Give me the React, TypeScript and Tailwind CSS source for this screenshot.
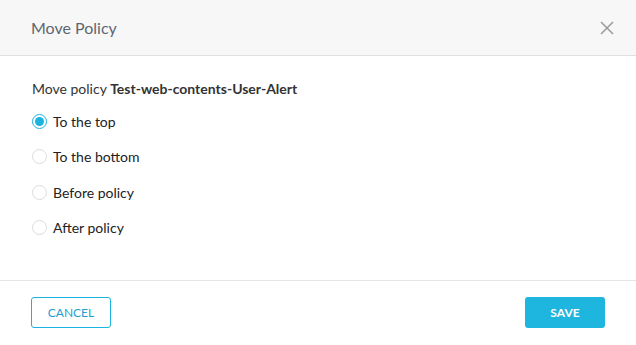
import { useState } from 'react';

const options = [
  { id: 'top', label: 'To the top' },
  { id: 'bottom', label: 'To the bottom' },
  { id: 'before', label: 'Before policy' },
  { id: 'after', label: 'After policy' },
];

function Radio({ checked }: { checked: boolean }) {
  return (
    <span
      className={`flex h-[15px] w-[15px] items-center justify-center rounded-full border bg-white ${
        checked ? 'border-[#1bb3df]' : 'border-[#dcdcdc]'
      }`}
    >
      {checked && <span className="h-[9px] w-[9px] rounded-full bg-[#1bb3df]" />}
    </span>
  );
}

export default function App() {
  const [value, setValue] = useState('top');

  return (
    <div className="flex h-[345px] w-[636px] flex-col bg-white font-['Lato','Liberation_Sans',sans-serif] text-[#333]">
      {/* Header */}
      <div className="flex h-[56px] items-center justify-between border-b border-[#e0e0e0] bg-[#f7f7f7] pl-[31px] pr-[22px]">
        <h2 className="text-[16px] text-[#5f6670]">Move Policy</h2>
        <button className="text-[#9a9a9a]" aria-label="Close">
          <svg width="14" height="14" viewBox="0 0 14 14" fill="none" stroke="currentColor" strokeWidth="1.5">
            <path d="M1 1l12 12M13 1L1 13" />
          </svg>
        </button>
      </div>

      {/* Body */}
      <div className="flex-1 border-b border-[#e5e5e5] px-[32px] pt-[23px]">
        <p className="text-[14px] leading-[20px] text-[#333]">
          Move policy <span className="font-bold">Test-web-contents-User-Alert</span>
        </p>
        <ul className="mt-[12px] flex flex-col gap-[15.5px]">
          {options.map(({ id, label }) => (
            <li key={id}>
              <label
                className="flex h-[20px] cursor-pointer items-center gap-[6px] text-[14px] text-[#222]"
                onClick={() => setValue(id)}
              >
                <Radio checked={value === id} />
                {label}
              </label>
            </li>
          ))}
        </ul>
      </div>

      {/* Footer */}
      <div className="flex h-[64px] items-start justify-between px-[31px] pt-[16px]">
        <button className="h-[31px] w-[80px] rounded-[3px] border border-[#1bb3df] bg-white text-[12px] text-[#1f9fd0]">
          CANCEL
        </button>
        <button className="h-[31px] w-[80px] rounded-[3px] bg-[#1eb6df] text-[12px] font-bold text-white">
          SAVE
        </button>
      </div>
    </div>
  );
}
